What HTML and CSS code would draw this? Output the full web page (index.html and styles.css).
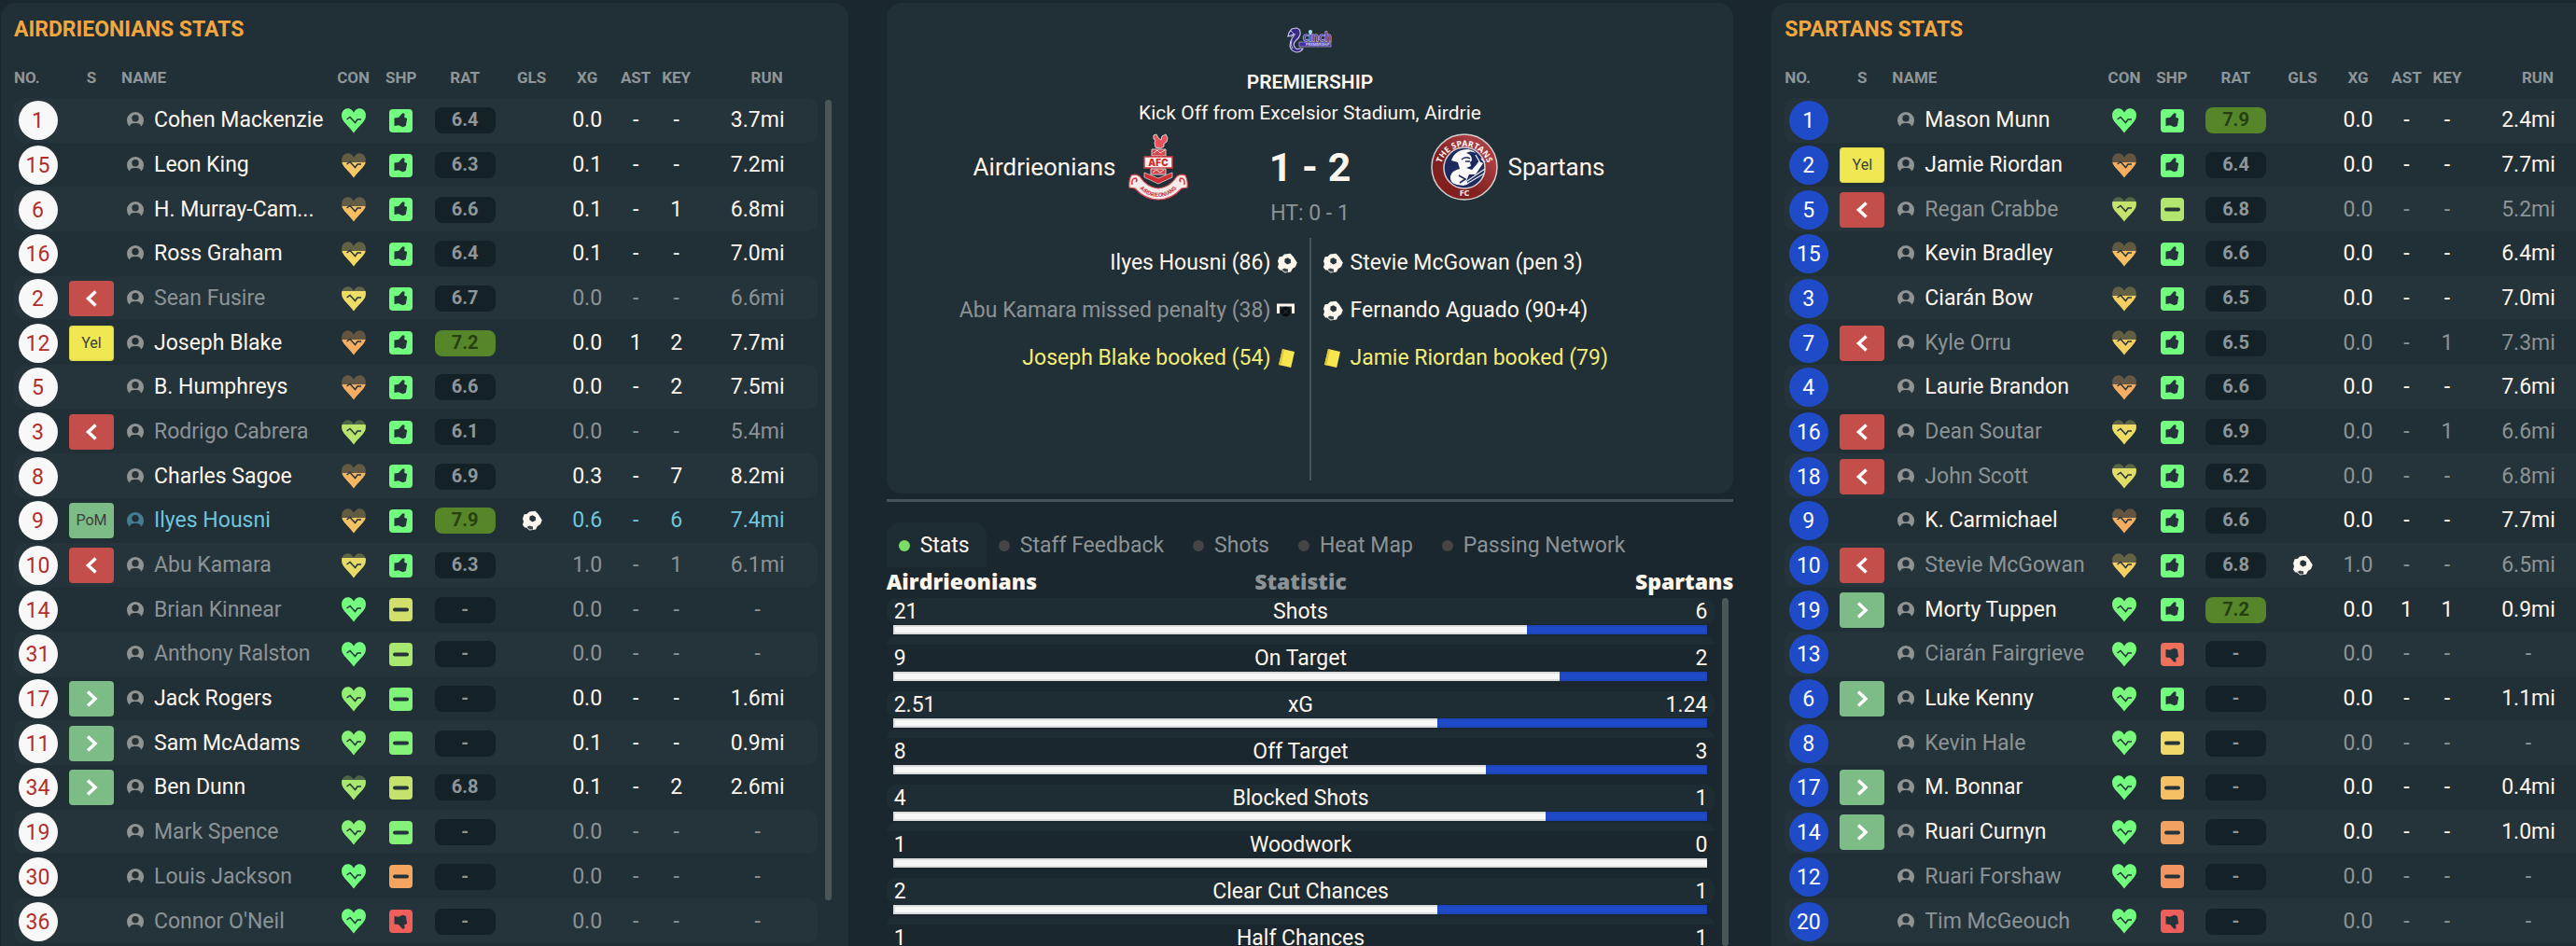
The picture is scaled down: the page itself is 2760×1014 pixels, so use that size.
FILE: index.html
```html
<!DOCTYPE html>
<html lang="en">
  <head>
    <title>Airdrieonians 1 - 2 Spartans</title>
    <meta charset="utf-8" />
    <link rel="stylesheet" href="styles.css">
  </head>
  <body>
    <!-- shared icons -->
    <svg class="sprite" aria-hidden="true">
      <defs>
        <clipPath id="fill-full"><rect width="26" height="27" /></clipPath>
        <clipPath id="fill-high"><rect y="5" width="26" height="22" /></clipPath>
        <clipPath id="fill-mid"><rect y="10" width="26" height="17" /></clipPath>
        <path id="heart" d="M13 26.5 C10 22 2.500 15.500 .8 11.500 C-.8 7 .4 2.600 3.600 .9 C7.500 -.9 11.500 1 13 4.800 C14.500 1 18.500 -.9 22.400 .9 C25.600 2.600 26.800 7 25.200 11.500 C23.500 15.500 16 22 13 26.500 Z" />
        <path id="thumb" d="M5.500 9.500 L10 9 L14.400 4.200 L16.600 4.800 L16.200 8.800 L19.200 10 L17.800 18 L14.600 19.200 L10 17.300 L5.500 18 Z" />
        <symbol id="user" viewBox="0 0 18 18">
          <path fill-rule="evenodd" d="M3 15.800 A9 9 0 1 1 15 15.800 C14.700 13.400 13.500 12 9 12 C4.500 12 3.300 13.400 3 15.800 Z M9 3 A3.700 3.700 0 1 0 9 10.400 A3.700 3.700 0 1 0 9 3 Z" fill="currentColor" />
        </symbol>
        <symbol id="ball" viewBox="0 0 22 22">
          <path d="M8 1.500 L14.500 .8 L17.800 4.300 L19.500 7 L21.800 10.500 L20 15 L16.800 17 L15 20.600 L8.500 21.500 L4.800 18.600 L3.200 18.500 L.9 15.500 L2 12 L1 9 L2.600 4.200 L5.600 4 Z" fill="#fdf6ed" />
          <path d="M11.600 5.200 L15 7.200 L14.800 11 L11.200 12.400 L8.200 10 L8.600 6.600 Z" fill="#26333a" />
          <path d="M5.500 18 L8 16.600 L12 17.400 L12 20.500 L8.500 20.500 Z" fill="#3c484e" />
        </symbol>
        <symbol id="card" viewBox="0 0 22 22">
          <path d="M6 1 L19 4 L15.200 21 L2 18 Z" fill="#f8e64e" />
          <path d="M6 1 L8 1.500 L4.400 18.600 L2 18 Z" fill="#d8c33b" />
        </symbol>
        <symbol id="missed" viewBox="0 0 22 22">
          <path d="M1.500 14 V5 H17.500 V14" fill="none" stroke="#fdf6ed" stroke-width="3" />
          <circle cx="9.500" cy="12" r="5.200" fill="#0a0d0f" />
          <path d="M7 9.500 L12 14.500 M12 9.500 L7 14.500" stroke="#2c3a40" stroke-width="1" />
        </symbol>
      </defs>
    </svg>

    <main class="match">
      <section class="panel">
        <h2 class="panel-title">Airdrieonians Stats</h2>
        <div class="panel-body">
          <table class="players home">
            <thead>
              <tr>
                <th class="no">No.</th><th class="st">S</th><th class="name">Name</th>
                <th class="con">Con</th><th class="shp">Shp</th><th class="rat">Rat</th>
                <th class="gls">Gls</th><th class="xg">xG</th><th class="ast">Ast</th>
                <th class="key">Key</th><th class="run">Run</th>
              </tr>
            </thead>
            <tbody id="home"></tbody>
          </table>
          <div class="scrollbar"></div>
        </div>
      </section>

      <section class="centre">
        <div class="scorecard">
          <svg class="league" viewBox="0 0 48 28" role="img" aria-label="cinch Premiership">
            <path d="M4 9 L1 10 L2 6 L5 2 L10 1 Q15 2 14 8 Q13 12 9 15 Q6 18 8 21 Q10 25 13 23 L17 23 Q15 27 10 27 Q4 26 3 20 Q3 15 6 11 L8 8 Z" fill="#372a86" stroke="#c9c4e6" stroke-width="1.200" />
            <path d="M4 4 L7 7 L4 11 M5 14 Q3 19 6 23" fill="none" stroke="#a9c8e8" stroke-width="1" />
            <text x="17" y="15" class="league-name">cinch</text>
            <rect x="13" y="16" width="34" height="5" fill="#43309b" stroke="#c9c4e6" stroke-width=".6" />
            <text x="20" y="20.300" class="league-sub">PREMIERSHIP</text>
            <circle cx="25" cy="5" r="2" fill="#b5e3e6" />
          </svg>
          <h1 class="league-title">Premiership</h1>
          <p class="venue">Kick Off from Excelsior Stadium, Airdrie</p>
          <div class="score-row">
            <div class="team team-home">
              <span>Airdrieonians</span>
              <svg class="crest" viewBox="0 0 64 72" role="img" aria-label="Airdrieonians crest">
                <path d="M27 2 L30 1 L32 5 L35 7 L36 3 L40 1 L42 5 L41 9 L38 11 L38 14 L34 16 L29 15 L28 10 L29 7 L27 6 Z" fill="#e9525a" stroke="#d8d3d3" />
                <path d="M25 17 H40 V24 H25 Z" fill="#d8444b" stroke="#d8d3d3" />
                <path d="M27 21 L31 18 L34 21 L39 18" fill="none" stroke="#f3dcdc" />
                <rect x="17" y="25" width="30" height="12" fill="#faf4f4" stroke="#d5363c" stroke-width="1.500" />
                <text x="32" y="35" text-anchor="middle" class="crest-afc">AFC</text>
                <path d="M24 38 H40 V44 H24 Z" fill="#d8444b" stroke="#d8d3d3" />
                <path d="M26 42 L30 39 L34 42 L38 39" fill="none" stroke="#f3dcdc" />
                <path d="M17 42 L32 48 L47 42 V47 L32 54 L17 47 Z" fill="#d02c31" stroke="#d8d3d3" stroke-width=".8" />
                <path d="M3 45 Q8 43 12 46 Q20 58 32 59 Q44 58 52 46 Q56 43 61 45 Q64 50 63 58 L57 59 Q46 71 32 71 Q18 71 7 59 L1 58 Q0 50 3 45 Z" fill="#f6eaea" stroke="#d5474d" stroke-width="1.200" />
                <path d="M4 55 Q3 48 8 48 Q10 50 8 52 M60 55 Q61 48 56 48 Q54 50 56 52" fill="none" stroke="#d5363c" stroke-width="1.500" />
                <path id="ribbon" d="M9 55 Q18 68 32 68 Q46 68 55 55" fill="none" />
                <text class="crest-ribbon" text-anchor="middle"><textPath href="#ribbon" startOffset="50%">AIRDRIEONIANS</textPath></text>
              </svg>
            </div>
            <strong class="score">1 - 2</strong>
            <div class="team team-away">
              <svg class="crest wide" viewBox="0 0 72 72" role="img" aria-label="The Spartans FC crest">
                <defs>
                  <linearGradient id="ring" x1="0" y1="1" x2="1" y2="0">
                    <stop offset=".4" stop-color="#81201f" />
                    <stop offset=".75" stop-color="#a83d42" />
                  </linearGradient>
                </defs>
                <circle cx="36" cy="36" r="35" fill="url(#ring)" stroke="#d4cfd0" stroke-width="1.500" />
                <circle cx="36" cy="37" r="22" fill="#1c2a5e" stroke="#d4cfd0" stroke-width="1.500" />
                <path d="M22 29 Q26 17 40 17 Q46 18 48 21 Q42 18 38 21 Q44 22 44 29 L42 31 L43 35 L38 37 L44 39 L52 30 L56 32 L48 44 L41 44 L38 51 L40 54 L35 56 L28 55 Q20 53 21 46 Q22 40 31 38 L29 31 Z" fill="#fbf9fa" />
                <path d="M33 28 Q37 24 42 27 M30 45 L37 49 L31 53 M42 30 H37" fill="none" stroke="#1c2a5e" stroke-width="1.600" />
                <path d="M36 53 L58 38 M37 55 L57 43 M48 23 L52 30 L50 33 M54 27 L58 31" fill="none" stroke="#e9ecf4" stroke-width="1.300" />
                <path id="arc" d="M10 40 A26 26 0 1 1 62 40" fill="none" />
                <text class="crest-arc" text-anchor="middle"><textPath href="#arc" startOffset="50%">THE SPARTANS</textPath></text>
                <text x="36" y="67" text-anchor="middle" class="crest-arc">FC</text>
              </svg>
              <span>Spartans</span>
            </div>
          </div>
          <p class="half-time">HT: 0 - 1</p>
          <div class="events">
            <ul class="events-home">
              <li><span>Ilyes Housni (86)</span><svg><use href="#ball" /></svg></li>
              <li class="dim"><span>Abu Kamara missed penalty (38)</span><svg><use href="#missed" /></svg></li>
              <li class="booked"><span>Joseph Blake booked (54)</span><svg><use href="#card" /></svg></li>
            </ul>
            <ul class="events-away">
              <li><svg><use href="#ball" /></svg><span>Stevie McGowan (pen 3)</span></li>
              <li><svg><use href="#ball" /></svg><span>Fernando Aguado (90+4)</span></li>
              <li class="booked"><svg><use href="#card" /></svg><span>Jamie Riordan booked (79)</span></li>
            </ul>
          </div>
        </div>

        <nav class="tabs">
          <button class="tab active" type="button">Stats</button>
          <button class="tab" type="button">Staff Feedback</button>
          <button class="tab" type="button">Shots</button>
          <button class="tab" type="button">Heat Map</button>
          <button class="tab" type="button">Passing Network</button>
        </nav>

        <div class="stats-head">
          <span>Airdrieonians</span>
          <span class="statistic">Statistic</span>
          <span>Spartans</span>
        </div>
        <div class="stats-body">
          <div class="stats" id="stats"></div>
          <div class="scrollbar"></div>
        </div>
      </section>

      <section class="panel">
        <h2 class="panel-title">Spartans Stats</h2>
        <div class="panel-body">
          <table class="players away">
            <thead>
              <tr>
                <th class="no">No.</th><th class="st">S</th><th class="name">Name</th>
                <th class="con">Con</th><th class="shp">Shp</th><th class="rat">Rat</th>
                <th class="gls">Gls</th><th class="xg">xG</th><th class="ast">Ast</th>
                <th class="key">Key</th><th class="run">Run</th>
              </tr>
            </thead>
            <tbody id="away"></tbody>
          </table>
          <div class="scrollbar"></div>
        </div>
      </section>
    </main>

    <script src="script.js"></script>
  </body>
</html>
```
FILE: styles.css
```css
* {
  box-sizing: border-box;
}
body {
  margin: 0;
  background: #1a272e;
  color: #fdf6ed;
  font-family: Roboto, "Liberation Sans", sans-serif;
  font-size: 23px;
  line-height: 28px;
  overflow: hidden;
}
h1, h2, p, ul {
  margin: 0;
  padding: 0;
}
.sprite {
  position: absolute;
  width: 0;
  height: 0;
}
/* the third column runs past the window edge */
.match {
  display: grid;
  grid-template-columns: repeat(3, minmax(0, 1fr));
  gap: 41px;
  height: calc(100vh - 3px);
  margin: 3px -46px 0 1px;
}

/* player tables */
.panel {
  display: flex;
  flex-direction: column;
  min-height: 0;
  padding: 14px 18px 3px 14px;
  background: #212f36;
  border-radius: 16px 16px 0 0;
}
.panel-title {
  color: #f2a640;
  font-size: 23px;
  font-weight: 700;
  line-height: 30px;
  text-transform: uppercase;
}
.panel-body {
  display: flex;
  flex: 1;
  gap: 8px;
}
.panel-body .scrollbar {
  margin: 60px 0 46px;
}
.scrollbar {
  width: 7px;
  border-radius: 4px;
  background: #4a5658;
}
.players {
  flex: 1;
  height: 100%;
  table-layout: fixed;
  border-spacing: 0;
}
.players th {
  height: 58px;
  padding: 13px 0 0;
  color: #8f9699;
  font-size: 17px;
  font-weight: 700;
  line-height: 20px;
  text-transform: uppercase;
}
.players td {
  padding: 1px 0 0;
  text-align: center;
  line-height: 28px;
}
.players tbody tr:nth-child(odd) td {
  background: #25333a;
}
.players td:first-child {
  border-radius: 10px 0 0 10px;
}
.players td:last-child {
  border-radius: 0 10px 10px 0;
}
.players .no {
  width: 51px;
}
.players .st {
  width: 64px;
}
.players .con {
  width: 52px;
}
.players .shp {
  width: 50px;
}
.players .rat {
  width: 87px;
}
.players .gls {
  width: 56px;
}
.players .xg {
  width: 63px;
}
.players .ast {
  width: 41px;
}
.players .key {
  width: 46px;
}
.players .run {
  width: 128px;
}
.players th.no {
  text-align: left;
}
.players th.name {
  text-align: left;
}
.players th.run {
  padding-right: 37px;
  text-align: right;
}
.players svg {
  display: block;
  margin: 0 auto;
}
.shirt {
  display: block;
  width: 42px;
  height: 42px;
  margin: 0 auto;
  border-radius: 50%;
  line-height: 44px;
}
.home .shirt {
  background: #f8f8f8;
  color: #b02e2b;
}
.away .shirt {
  background: #1f4bc9;
  color: #fff;
}
.badge {
  display: flex;
  align-items: center;
  justify-content: center;
  width: 48px;
  height: 38px;
  margin: 0 auto;
  border-radius: 4px;
  color: #3a3f38;
  font-size: 16px;
}
.badge.off {
  background: #c44e4a;
}
.badge.on, .badge.pom {
  background: #7dbb87;
}
.badge.yel {
  background: #efe852;
  box-shadow: inset 0 0 2px #b5ae3a;
}
.player {
  display: flex;
  align-items: center;
  gap: 11px;
  padding-left: 6px;
  line-height: 30px;
  white-space: nowrap;
}
.players .player svg {
  width: 18px;
  height: 18px;
  margin: 0;
  color: #8f9493;
}
.rating {
  display: block;
  width: 65px;
  height: 28px;
  margin: 0 auto;
  border-radius: 8px;
  background: #142127;
  color: #8f9699;
  font-size: 20px;
  font-weight: 700;
  line-height: 27px;
}
.rating.good {
  background: #56852a;
  color: #26400f;
}
.dim {
  color: #8c9396;
}
.star {
  color: #6ec6dc;
}
.players .star .player svg {
  color: #457d90;
}

/* scorecard */
.centre {
  display: flex;
  flex-direction: column;
  min-height: 0;
}
.scorecard {
  display: flex;
  flex: none;
  flex-direction: column;
  align-items: center;
  padding: 26px 0 14px;
  background: #212f36;
  border-radius: 16px;
}
.league {
  width: 48px;
  height: 28px;
}
.league-name {
  fill: #5b49b8;
  stroke: #d4cfee;
  stroke-width: 1px;
  paint-order: stroke;
  font: 700 13px Lato, sans-serif;
}
.league-sub {
  fill: #d4cfee;
  font: 700 4px Roboto, sans-serif;
}
.league-title {
  margin-top: 17px;
  font-size: 21px;
  font-weight: 600;
  line-height: 28px;
  text-transform: uppercase;
}
.venue {
  margin-top: 5px;
  font-size: 21px;
}
.score-row {
  display: grid;
  grid-template-columns: 1fr 260px 1fr;
  align-items: center;
  width: 100%;
  margin-top: 8px;
  font-size: 26px;
}
.team {
  display: flex;
  align-items: center;
  gap: 14px;
}
.team-home {
  justify-content: flex-end;
}
.team-away {
  gap: 10px;
}
.crest {
  width: 64px;
  height: 72px;
}
.crest.wide {
  width: 72px;
}
.crest-afc {
  fill: #d02c31;
  font: 900 10px Inter, sans-serif;
}
.crest-ribbon {
  fill: #c8363b;
  font: 700 6px Roboto, sans-serif;
}
.crest-arc {
  fill: #fbf3f3;
  font: 700 9px "Noto Sans", sans-serif;
}
.score {
  font-size: 43px;
  line-height: 48px;
  text-align: center;
}
.half-time {
  color: #8c9396;
}
.events {
  display: grid;
  grid-template-columns: 1fr 1fr;
  width: 100%;
  height: 260px;
  margin-top: 12px;
}
.events ul {
  padding-top: 1px;
  list-style: none;
}
.events li {
  display: flex;
  align-items: center;
  gap: 7px;
  height: 51px;
}
.events svg {
  width: 22px;
  height: 22px;
}
.events-home li {
  justify-content: flex-end;
  padding-right: 13px;
}
.events-away {
  border-left: 2px solid #47535a;
}
.events-away li {
  padding-left: 12px;
}
.booked {
  color: #f3ec78;
}

/* tabs */
.tabs {
  display: flex;
  flex: none;
  margin-top: 6px;
  padding-top: 22px;
  border-top: 3px solid #47535a;
}
.tab {
  display: flex;
  align-items: center;
  height: 48px;
  padding: 2px 18px 0 13px;
  border: 0;
  border-radius: 14px 14px 0 0;
  background: none;
  color: #8c9396;
  font: inherit;
  cursor: pointer;
}
.tab::before {
  content: "";
  width: 12px;
  height: 12px;
  margin-right: 11px;
  border-radius: 50%;
  background: #454545;
}
.tab.active {
  background: #1e2c33;
  color: #fdf6ed;
}
.tab.active::before {
  background: #7bdc66;
}

/* team comparison */
.stats-head {
  display: grid;
  flex: none;
  grid-template-columns: 1fr auto 1fr;
  padding-bottom: 2px;
  font: 800 23px/30px "Open Sans", sans-serif;
}
.stats-head span:last-child {
  text-align: right;
}
.statistic {
  margin-right: 20px;
  color: #8c9396;
}
.stats-body {
  display: flex;
  flex: 1;
  gap: 8px;
  min-height: 0;
  padding: 1px 5px 0 0;
  overflow: hidden;
}
.stats {
  flex: 1;
}
.stat-label {
  display: grid;
  grid-template-columns: 1fr auto 1fr;
  height: 28px;
  padding: 0 8px;
  border-radius: 10px;
  line-height: 30px;
}
.stat-label span:last-child {
  text-align: right;
}
.stat-bar {
  height: 10px;
  margin: 1px 8px 2px 7px;
  border: 2px solid #1c45bb;
  background: #1f4bc9;
}
.stat-fill {
  height: 10px;
  margin: -2px;
  border: 2px solid #dddcdc;
  border-right-width: 0;
  background: #f8f8f8;
}
.stat::after {
  content: "";
  display: block;
  height: 9px;
  border-radius: 9px 9px 0 0;
}
.stat:nth-child(odd) .stat-label,
.stat:nth-child(odd)::after {
  background: #1e2c33;
}
```
FILE: script.js
```js
const green = "#72fd7e";

// no, status, name, condition [colour, level], sharpness [icon, colour], rating, goals, xg, ast, key, run, tone
const home = [
  [1, "", "Cohen Mackenzie", ["#72fd7e", "full"], ["up", green], "6.4", 0, "0.0", "-", "-", "3.7mi", ""],
  [15, "", "Leon King", ["#f6c763", "mid"], ["up", green], "6.3", 0, "0.1", "-", "-", "7.2mi", ""],
  [6, "", "H. Murray-Cam...", ["#f6bd62", "mid"], ["up", green], "6.6", 0, "0.1", "-", "1", "6.8mi", ""],
  [16, "", "Ross Graham", ["#f4d863", "mid"], ["up", green], "6.4", 0, "0.1", "-", "-", "7.0mi", ""],
  [2, "off", "Sean Fusire", ["#efdc66", "high"], ["up", green], "6.7", 0, "0.0", "-", "-", "6.6mi", "dim"],
  [12, "yel", "Joseph Blake", ["#f5ae61", "mid"], ["up", green], "7.2", 0, "0.0", "1", "2", "7.7mi", ""],
  [5, "", "B. Humphreys", ["#f5ae61", "mid"], ["up", green], "6.6", 0, "0.0", "-", "2", "7.5mi", ""],
  [3, "off", "Rodrigo Cabrera", ["#b9e46d", "high"], ["up", green], "6.1", 0, "0.0", "-", "-", "5.4mi", "dim"],
  [8, "", "Charles Sagoe", ["#f5b561", "mid"], ["up", green], "6.9", 0, "0.3", "-", "7", "8.2mi", ""],
  [9, "pom", "Ilyes Housni", ["#f6c263", "mid"], ["up", green], "7.9", 1, "0.6", "-", "6", "7.4mi", "star"],
  [10, "off", "Abu Kamara", ["#e6db66", "high"], ["up", green], "6.3", 0, "1.0", "-", "1", "6.1mi", "dim"],
  [14, "", "Brian Kinnear", ["#72fd7e", "full"], ["minus", "#d2df6a"], "-", 0, "0.0", "-", "-", "-", "dim"],
  [31, "", "Anthony Ralston", ["#72fd7e", "full"], ["minus", "#a8e86f"], "-", 0, "0.0", "-", "-", "-", "dim"],
  [17, "on", "Jack Rogers", ["#92ef73", "full"], ["minus", "#80f379"], "-", 0, "0.0", "-", "-", "1.6mi", ""],
  [11, "on", "Sam McAdams", ["#87f276", "full"], ["minus", "#84f277"], "-", 0, "0.1", "-", "-", "0.9mi", ""],
  [34, "on", "Ben Dunn", ["#a8e86f", "high"], ["minus", "#c4e26c"], "6.8", 0, "0.1", "-", "2", "2.6mi", ""],
  [19, "", "Mark Spence", ["#87f276", "full"], ["minus", "#84f277"], "-", 0, "0.0", "-", "-", "-", "dim"],
  [30, "", "Louis Jackson", ["#72fd7e", "full"], ["minus", "#f4a661"], "-", 0, "0.0", "-", "-", "-", "dim"],
  [36, "", "Connor O'Neil", ["#72fd7e", "full"], ["down", "#ee5f5c"], "-", 0, "0.0", "-", "-", "-", "dim"],
];

const away = [
  [1, "", "Mason Munn", ["#72fd7e", "full"], ["up", green], "7.9", 0, "0.0", "-", "-", "2.4mi", ""],
  [2, "yel", "Jamie Riordan", ["#f5ae61", "mid"], ["up", green], "6.4", 0, "0.0", "-", "-", "7.7mi", ""],
  [5, "off", "Regan Crabbe", ["#c4e26c", "high"], ["minus", "#b2e66e"], "6.8", 0, "0.0", "-", "-", "5.2mi", "dim"],
  [15, "", "Kevin Bradley", ["#f6bf62", "mid"], ["up", green], "6.6", 0, "0.0", "-", "-", "6.4mi", ""],
  [3, "", "Ciarán Bow", ["#f5ce63", "mid"], ["up", green], "6.5", 0, "0.0", "-", "-", "7.0mi", ""],
  [7, "off", "Kyle Orru", ["#f5ce63", "mid"], ["up", green], "6.5", 0, "0.0", "-", "1", "7.3mi", "dim"],
  [4, "", "Laurie Brandon", ["#f5ae61", "mid"], ["up", green], "6.6", 0, "0.0", "-", "-", "7.6mi", ""],
  [16, "off", "Dean Soutar", ["#efdc66", "high"], ["up", green], "6.9", 0, "0.0", "-", "1", "6.6mi", "dim"],
  [18, "off", "John Scott", ["#e0dc68", "high"], ["up", green], "6.2", 0, "0.0", "-", "-", "6.8mi", "dim"],
  [9, "", "K. Carmichael", ["#f5ae61", "mid"], ["up", green], "6.6", 0, "0.0", "-", "-", "7.7mi", ""],
  [10, "off", "Stevie McGowan", ["#f5ce63", "mid"], ["up", green], "6.8", 1, "1.0", "-", "-", "6.5mi", "dim"],
  [19, "on", "Morty Tuppen", ["#78f97c", "full"], ["up", green], "7.2", 0, "0.0", "1", "1", "0.9mi", ""],
  [13, "", "Ciarán Fairgrieve", ["#78f97c", "full"], ["down", "#ee705c"], "-", 0, "0.0", "-", "-", "-", "dim"],
  [6, "on", "Luke Kenny", ["#78f97c", "full"], ["up", green], "-", 0, "0.0", "-", "-", "1.1mi", ""],
  [8, "", "Kevin Hale", ["#78f97c", "full"], ["minus", "#f0d968"], "-", 0, "0.0", "-", "-", "-", "dim"],
  [17, "on", "M. Bonnar", ["#72fd7e", "full"], ["minus", "#f5c064"], "-", 0, "0.0", "-", "-", "0.4mi", ""],
  [14, "on", "Ruari Curnyn", ["#72fd7e", "full"], ["minus", "#f2a161"], "-", 0, "0.0", "-", "-", "1.0mi", ""],
  [12, "", "Ruari Forshaw", ["#72fd7e", "full"], ["minus", "#f19460"], "-", 0, "0.0", "-", "-", "-", "dim"],
  [20, "", "Tim McGeouch", ["#72fd7e", "full"], ["down", "#ee5f5c"], "-", 0, "0.0", "-", "-", "-", "dim"],
];

// home value, label, away value, home share in %
const stats = [
  ["21", "Shots", "6", 77.8],
  ["9", "On Target", "2", 81.8],
  ["2.51", "xG", "1.24", 66.7],
  ["8", "Off Target", "3", 72.7],
  ["4", "Blocked Shots", "1", 80],
  ["1", "Woodwork", "0", 100],
  ["2", "Clear Cut Chances", "1", 66.7],
  ["1", "Half Chances", "1", 50],
];

const badges = {
  "": "",
  off: '<span class="badge off"><svg width="14" height="20"><path d="M11.500 2.500 L3.500 10 L11.500 17.500" fill="none" stroke="#fff" stroke-width="3.500" /></svg></span>',
  on: '<span class="badge on"><svg width="14" height="20"><path d="M3 2.500 L11 10 L3 17.500" fill="none" stroke="#fff" stroke-width="3.500" /></svg></span>',
  yel: '<span class="badge yel">Yel</span>',
  pom: '<span class="badge pom">PoM</span>',
};

const marks = {
  up: '<use href="#thumb" />',
  down: '<use href="#thumb" transform="translate(0 25) scale(1 -1)" />',
  minus: '<rect x="4" y="10.500" width="17" height="4" rx="2" />',
};

function heart(color, level) {
  return `<svg width="26" height="27" fill="${color}">
    <use href="#heart" opacity=".3" />
    <use href="#heart" clip-path="url(#fill-${level})" />
    <path d="M5.500 12 L9 9.500 L14.500 15.500 L17 12 H21" fill="none" stroke="#26353b" stroke-width="1.500" />
  </svg>`;
}

function sharpness(icon, color) {
  return `<svg width="25" height="25" fill="#25333a">
    <rect width="25" height="25" rx="4" fill="${color}" />${marks[icon]}
  </svg>`;
}

function playerRow(p) {
  const [no, status, name, con, shp, rating, goals, xg, ast, key, run, tone] = p;
  return `<tr class="${tone}">
    <td><span class="shirt">${no}</span></td>
    <td>${badges[status]}</td>
    <td><div class="player"><svg><use href="#user" /></svg>${name}</div></td>
    <td>${heart(con[0], con[1])}</td>
    <td>${sharpness(shp[0], shp[1])}</td>
    <td><span class="rating ${parseFloat(rating) >= 7 ? "good" : ""}">${rating}</span></td>
    <td>${goals ? '<svg width="22" height="22"><use href="#ball" /></svg>' : ""}</td>
    <td>${xg}</td>
    <td>${ast}</td>
    <td>${key}</td>
    <td>${run}</td>
  </tr>`;
}

function statRow(s) {
  return `<div class="stat">
    <div class="stat-label"><span>${s[0]}</span><span>${s[1]}</span><span>${s[2]}</span></div>
    <div class="stat-bar"><div class="stat-fill" style="width: calc(${s[3]}% + 4px)"></div></div>
  </div>`;
}

document.getElementById("home").innerHTML = home.map(playerRow).join("");
document.getElementById("away").innerHTML = away.map(playerRow).join("");
document.getElementById("stats").innerHTML = stats.map(statRow).join("");
```
